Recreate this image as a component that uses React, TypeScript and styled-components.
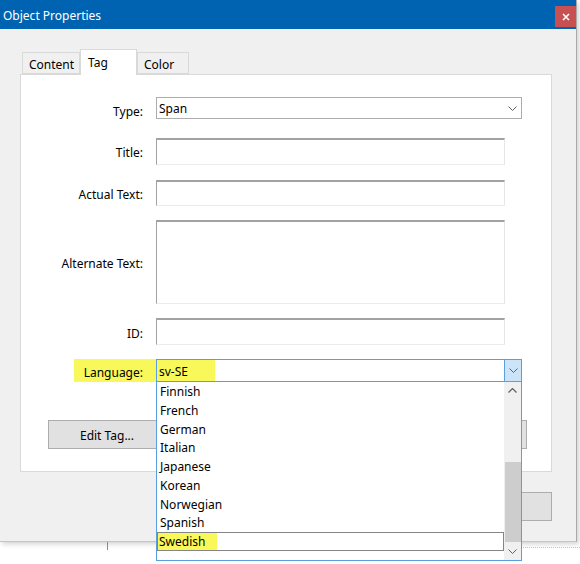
import React from "react";
import styled, { createGlobalStyle } from "styled-components";

const Global = createGlobalStyle`
  html, body { margin: 0; padding: 0; background: #ffffff; }
  body { font-family: "Noto Sans", "Open Sans", sans-serif; font-size: 12px; color: #000; }
  * { box-sizing: border-box; }
`;

const Page = styled.div`
  width: 580px;
  height: 564px;
  overflow: hidden;
  background: #ffffff;
  display: flex;
  flex-direction: column;
`;

const Dialog = styled.div`
  width: 577px;
  height: 542px;
  background: #f0f0f0;
  border-right: 1px solid #a9a9a9;
  border-bottom: 1px solid #c4c4c4;
  box-shadow: 2px 2px 5px rgba(0, 0, 0, 0.18);
  display: flex;
  flex-direction: column;
  flex-shrink: 0;
`;

const TitleBar = styled.div`
  height: 29px;
  background: #0063b1;
  color: #ffffff;
  display: flex;
  align-items: center;
  padding-left: 3px;
  font-size: 12px;
  flex-shrink: 0;
`;

const TitleText = styled.span`
  line-height: 16px;
  padding-top: 2px;
`;

const CloseButton = styled.div`
  margin-left: auto;
  margin-top: 4px;
  width: 21px;
  height: 21px;
  background: #c75050;
  display: flex;
  align-items: center;
  justify-content: center;
`;

const Body = styled.div`
  flex: 1;
  padding: 20px 24px 0 20px;
  display: flex;
  flex-direction: column;
`;

const TabStrip = styled.div`
  height: 25px;
  display: flex;
  align-items: flex-end;
  padding-left: 2px;
`;

const Tab = styled.div<{ $w: number; $active?: boolean }>`
  width: ${(p) => p.$w}px;
  height: ${(p) => (p.$active ? 26 : 22)}px;
  margin-bottom: ${(p) => (p.$active ? -1 : 0)}px;
  background: ${(p) => (p.$active ? "#ffffff" : "#f0f0f0")};
  border: 1px solid #d9d9d9;
  border-bottom: ${(p) => (p.$active ? "none" : "1px solid #d9d9d9")};
  padding: ${(p) => (p.$active ? "4px 0 0 7px" : "3px 0 0 6px")};
  line-height: 18px;
  font-size: 12px;
  color: #000;
  position: relative;
  z-index: ${(p) => (p.$active ? 1 : 0)};
`;

const Panel = styled.div`
  height: 398px;
  background: #ffffff;
  border: 1px solid #d9d9d9;
  padding-top: 21px;
  display: flex;
  flex-direction: column;
`;

const FormRow = styled.div<{ $top?: number; $h: number }>`
  display: grid;
  grid-template-columns: 122px auto;
  column-gap: 13px;
  margin-top: ${(p) => p.$top ?? 0}px;
  height: ${(p) => p.$h}px;
  align-items: center;
`;

const Label = styled.div<{ $dy?: number }>`
  text-align: right;
  padding-top: ${(p) => 3 + (p.$dy ?? 0) * 2}px;
  line-height: 16px;
  white-space: nowrap;
`;

const HighlightLabel = styled.div`
  justify-self: end;
  align-self: stretch;
  margin-right: -13px;
  padding: 4px 13px 0 10px;
  background: #f8f85a;
  line-height: 19px;
  white-space: nowrap;
`;

const SelectBox = styled.div<{ $w: number }>`
  width: ${(p) => p.$w}px;
  height: 22px;
  border: 1px solid #adadad;
  background: #ffffff;
  display: flex;
  align-items: center;
  padding-left: 2px;
  line-height: 18px;
`;

const SelectValue = styled.span`
  flex: 1;
  padding-top: 1px;
`;

const Chevron = styled.span`
  width: 17px;
  height: 100%;
  display: flex;
  align-items: center;
  justify-content: center;
`;

const TextField = styled.div<{ $w: number; $h: number }>`
  width: ${(p) => p.$w}px;
  height: ${(p) => p.$h}px;
  background: #ffffff;
  border-style: solid;
  border-width: 2px 1px 1px 1px;
  border-color: #a2a2a2 #e6e6e6 #ececec #a2a2a2;
`;

const ComboWrap = styled.div`
  position: relative;
  width: 366px;
  height: 23px;
`;

const Combo = styled.div`
  height: 100%;
  border: 1px solid #5a9fe0;
  background: #ffffff;
  display: flex;
  align-items: stretch;
`;

const ComboText = styled.div`
  flex: 1;
  display: flex;
`;

const ComboHighlight = styled.span`
  background: #f8f85a;
  padding: 3px 0 0 2px;
  width: 58px;
  line-height: 18px;
`;

const ComboButton = styled.div`
  width: 17px;
  background: #cce4f7;
  border-left: 1px solid #5a9fe0;
  display: flex;
  align-items: center;
  justify-content: center;
`;

const DropList = styled.div`
  position: absolute;
  top: 100%;
  left: 0;
  width: 366px;
  height: 179px;
  background: #ffffff;
  border: 1px solid #5a9fe0;
  border-top: none;
  display: flex;
  z-index: 10;
`;

const Items = styled.div`
  flex: 1;
  display: flex;
  flex-direction: column;
`;

const Item = styled.div<{ $focused?: boolean }>`
  height: 18.75px;
  line-height: 14.75px;
  padding-top: 2px;
  padding-left: ${(p) => (p.$focused ? 0 : 2)}px;
  border: 1px solid ${(p) => (p.$focused ? "#858585" : "transparent")};
  display: flex;
`;

const ItemMark = styled.span`
  background: #f8f85a;
  margin-top: -2px;
  padding-top: 2px;
  padding-left: 1px;
  width: 59px;
`;

const ScrollBar = styled.div`
  width: 17px;
  background: #f0f0f0;
  display: flex;
  flex-direction: column;
`;

const ScrollArrow = styled.div`
  height: 17px;
  display: flex;
  align-items: center;
  justify-content: center;
  flex-shrink: 0;
`;

const ScrollTrack = styled.div`
  flex: 1;
  display: flex;
  flex-direction: column;
  justify-content: flex-end;
  padding-bottom: 1px;
`;

const Thumb = styled.div`
  height: 80px;
  background: #cdcdcd;
  margin-left: 1px;
`;

const ButtonRow = styled.div<{ $top: number }>`
  margin-top: ${(p) => p.$top}px;
  display: flex;
  justify-content: space-between;
  padding: 0 24px 0 27px;
`;

const Button = styled.div<{ $w: number }>`
  width: ${(p) => p.$w}px;
  height: 29px;
  flex-shrink: 0;
  background: #e1e1e1;
  border: 1px solid #adadad;
  display: flex;
  align-items: center;
  justify-content: center;
  padding-top: 2px;
  line-height: 16px;
`;

const FooterRow = styled.div`
  margin-top: 20px;
  display: flex;
  justify-content: flex-end;
`;

const Backdrop = styled.div`
  flex: 1;
  display: flex;
  align-items: flex-start;
`;

const Tick = styled.div`
  margin-left: 107px;
  width: 1px;
  height: 8px;
  background: #8a8a8a;
`;

const Dotted = styled.div`
  margin-left: auto;
  margin-top: 5px;
  width: 57px;
  border-top: 1px dotted #c2c2c2;
`;

const ChevronDown = ({ color = "#606060" }: { color?: string }) => (
  <svg width="9" height="5" viewBox="0 0 9 5">
    <path d="M0.5 0.5 L4.5 4.5 L8.5 0.5" fill="none" stroke={color} strokeWidth="1" />
  </svg>
);

const ChevronUp = () => (
  <svg width="9" height="5" viewBox="0 0 9 5">
    <path d="M0.5 4.5 L4.5 0.5 L8.5 4.5" fill="none" stroke="#606060" strokeWidth="1.2" />
  </svg>
);

const CloseIcon = () => (
  <svg width="8" height="8" viewBox="0 0 8 8">
    <path d="M1 1 L7 7 M7 1 L1 7" stroke="#ffffff" strokeWidth="1.6" />
  </svg>
);

const languages = [
  "Finnish",
  "French",
  "German",
  "Italian",
  "Japanese",
  "Korean",
  "Norwegian",
  "Spanish",
  "Swedish",
];

export default function App() {
  return (
    <Page>
      <Global />
      <Dialog>
        <TitleBar>
          <TitleText>Object Properties</TitleText>
          <CloseButton>
            <CloseIcon />
          </CloseButton>
        </TitleBar>
        <Body>
          <TabStrip>
            <Tab $w={58}>Content</Tab>
            <Tab $w={57} $active>
              Tag
            </Tab>
            <Tab $w={52}>Color</Tab>
          </TabStrip>
          <Panel>
            <FormRow $h={22}>
              <Label $dy={2.5}>Type:</Label>
              <SelectBox $w={366}>
                <SelectValue>Span</SelectValue>
                <Chevron>
                  <ChevronDown />
                </Chevron>
              </SelectBox>
            </FormRow>
            <FormRow $top={20} $h={27}>
              <Label>Title:</Label>
              <TextField $w={349} $h={27} />
            </FormRow>
            <FormRow $top={15} $h={26}>
              <Label>Actual Text:</Label>
              <TextField $w={349} $h={26} />
            </FormRow>
            <FormRow $top={14} $h={84}>
              <Label>Alternate Text:</Label>
              <TextField $w={349} $h={84} />
            </FormRow>
            <FormRow $top={14} $h={27}>
              <Label $dy={0.5}>ID:</Label>
              <TextField $w={349} $h={27} />
            </FormRow>
            <FormRow $top={14} $h={23}>
              <HighlightLabel>Language:</HighlightLabel>
              <ComboWrap>
                <Combo>
                  <ComboText>
                    <ComboHighlight>sv-SE</ComboHighlight>
                  </ComboText>
                  <ComboButton>
                    <ChevronDown color="#4a6a8a" />
                  </ComboButton>
                </Combo>
                <DropList>
                  <Items>
                    {languages.map((l) =>
                      l === "Swedish" ? (
                        <Item key={l} $focused>
                          <ItemMark>{l}</ItemMark>
                        </Item>
                      ) : (
                        <Item key={l}>{l}</Item>
                      )
                    )}
                  </Items>
                  <ScrollBar>
                    <ScrollArrow>
                      <ChevronUp />
                    </ScrollArrow>
                    <ScrollTrack>
                      <Thumb />
                    </ScrollTrack>
                    <ScrollArrow>
                      <ChevronDown />
                    </ScrollArrow>
                  </ScrollBar>
                </DropList>
              </ComboWrap>
            </FormRow>
            <ButtonRow $top={38}>
              <Button $w={118}>Edit Tag...</Button>
              <Button $w={118}>Remove</Button>
            </ButtonRow>
          </Panel>
          <FooterRow>
            <Button $w={118}>Close</Button>
          </FooterRow>
        </Body>
      </Dialog>
      <Backdrop>
        <Tick />
        <Dotted />
      </Backdrop>
    </Page>
  );
}
